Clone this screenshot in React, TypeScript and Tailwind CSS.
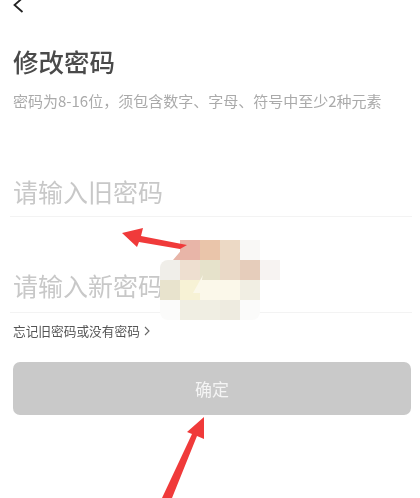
import React from "react";

// mosaic that covers part of the second field, one row per 20px
const mosaic: string[][] = [
  ["bg-transparent", "bg-[#e8b5a8]", "bg-[#eac5aa]", "bg-[#ecd9c5]", "bg-[#f9f8f6]", "bg-transparent"],
  ["bg-[#f0eee9] rounded-tl-[8px]", "bg-[#eedfd0]", "bg-[#e6e2cb]", "bg-[#ead9c7]", "bg-[#e6cdbb]", "bg-[#f7f3f2]"],
  ["bg-[#e8e3cd]", "bg-[#f7f2d5]", "bg-[#fbf8ea]", "bg-[#fbf8ea]", "bg-[#f1eee3]", "bg-white"],
  ["bg-[#fbfbfa] rounded-bl-[8px]", "bg-[#f0eee3]", "bg-[#f0eee3]", "bg-[#eeebe0]", "bg-[#fbfbfa] rounded-br-[8px]", "bg-transparent"],
];

export default function App() {
  return (
    <div className="relative w-[420px] h-[498px] overflow-hidden bg-white blur-[0.3px] font-['Noto_Sans_CJK_SC','Noto_Sans',sans-serif]">
      {/* BACK */}
      <div className="h-[14px] pl-[13px]">
        <svg width="12" height="16" viewBox="0 0 12 16" className="-mt-[3px]" fill="none" stroke="#222" strokeWidth="1.8">
          <path d="M9.5 1 L1.5 8 L9.5 15" />
        </svg>
      </div>

      {/* HEADER */}
      <div className="px-[13px] pt-[31px]">
        <h1 className="text-[25.5px] leading-[38px] font-medium text-[#4a4a4a]">修改密码</h1>
        <p className="mt-[11px] text-[15px] leading-[20px] text-[#aaa] whitespace-nowrap">
          密码为8-16位，须包含数字、字母、符号中至少2种元素
        </p>
      </div>

      {/* FIELDS */}
      <div className="mt-[56px] mx-[10px] w-[402px]">
        <div className="h-[50px] border-b border-[#f3f3f3] pl-[3px]">
          <input
            placeholder="请输入旧密码"
            className="w-full h-[47px] text-[25px] outline-none placeholder:text-[#c8c8c8]"
          />
        </div>
        <div className="h-[96px] border-b border-[#f3f3f3] pl-[3px] pt-[43px]">
          <input
            placeholder="请输入新密码"
            className="w-full h-[50px] text-[25px] outline-none placeholder:text-[#c8c8c8]"
          />
        </div>
      </div>

      {/* FORGOT LINK */}
      <div className="mt-[9px] pl-[13px] flex items-center gap-[4px] text-[12.7px] leading-[18px] text-[#555]">
        <span>忘记旧密码或没有密码</span>
        <svg width="6" height="10" viewBox="0 0 6 10" fill="none" stroke="#666" strokeWidth="1.1">
          <path d="M1 1 L5 5 L1 9" />
        </svg>
      </div>

      {/* SUBMIT */}
      <button className="block mt-[22px] ml-[13px] w-[398px] h-[53px] rounded-[7px] bg-[#c9c9c9] text-[17px] text-[#f4f4f4]">
        确定
      </button>

      {/* MOSAIC */}
      <div className="absolute left-[160px] top-[240px] w-[120px] grid grid-cols-6">
        {mosaic.flat().map((c, i) => (
          <div key={i} className={`h-[20px] ${c}`} />
        ))}
      </div>

      {/* RED ARROWS */}
      <svg className="absolute left-0 top-0" width="420" height="498" viewBox="0 0 420 498">
        <polygon points="190,240 180,240 180,260 173,260" fill="#e8b5a8" />
        <polygon points="203,275 193,293 205,293 200,288" fill="#fbf8ea" />
        <polygon
          points="122,233 143,228 141,236 187,245 180,249 139,242 137,247"
          fill="#f03a3a"
        />
        <polygon
          points="204,417 187,432 192,434 162,498 172,498 197,436 204,439"
          fill="#f03a3a"
        />
      </svg>
    </div>
  );
}
